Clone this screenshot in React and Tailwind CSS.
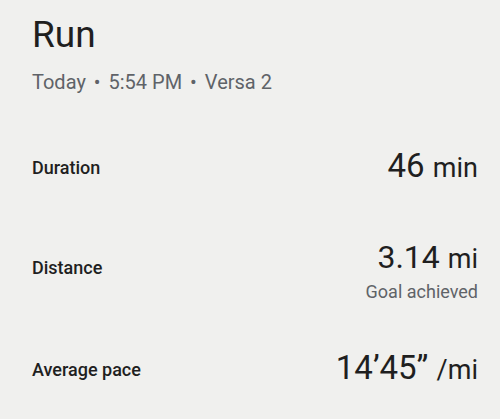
export default function App() {
  const font = { fontFamily: "Roboto, 'Noto Sans', sans-serif" };
  return (
    <div
      className="min-h-[419px] w-[500px] bg-[#f0f0ee] pl-8 pr-[22px] text-[#1f1f1f]"
      style={font}
    >
      <h1 className="pt-[11px] text-[37px] leading-[48px] font-normal">Run</h1>
      <p className="mt-[9px] text-[20px] leading-[28px] text-[#5f6368]">
        Today <span className="mx-[3px]">•</span> 5:54 PM{" "}
        <span className="mx-[3px]">•</span> Versa 2
      </p>

      <div className="mt-[50px] flex items-center justify-between">
        <span className="text-[18px] font-medium">Duration</span>
        <span className="text-[33px] leading-[40px]">
          46 <span className="text-[27px]">min</span>
        </span>
      </div>

      <div className="mt-[49px] flex items-center justify-between">
        <span className="mb-[6px] text-[18px] font-medium">Distance</span>
        <div className="flex flex-col items-end">
          <span className="text-[32px] leading-[40px]">
            3.14 <span className="text-[27px]">mi</span>
          </span>
          <span className="mt-[2px] text-[18px] leading-[22px] text-[#5f6368]">
            Goal achieved
          </span>
        </div>
      </div>

      <div className="mt-[45px] flex items-center justify-between">
        <span className="text-[18px] font-medium">Average pace</span>
        <span className="text-[33px] leading-[40px]">
          14’45” <span className="text-[27px]">/mi</span>
        </span>
      </div>
    </div>
  );
}
